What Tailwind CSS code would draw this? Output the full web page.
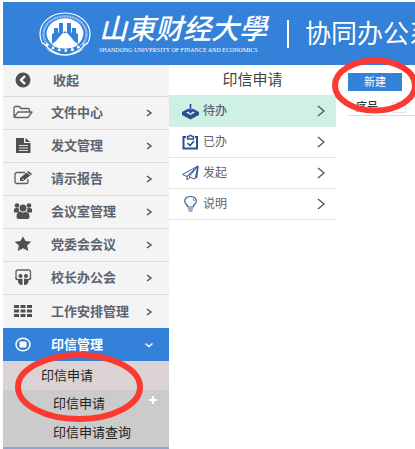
<!DOCTYPE html>
<html lang="zh-CN">
<head>
<meta charset="utf-8">
<meta name="viewport" content="width=device-width, initial-scale=1">
<title>协同办公系统</title>
<script src="https://cdn.jsdelivr.net/npm/@tailwindcss/browser@4"></script>
</head>
<body class="relative min-h-screen overflow-hidden bg-white pl-[3px] pt-[2px] font-['Liberation_Sans','Noto_Sans_CJK_SC',sans-serif] text-[13px] text-[#5b6470]">
<header class="flex h-[63px] items-center overflow-hidden whitespace-nowrap bg-[#3381d8] pl-9 text-white">
  <svg class="h-11 w-[52px] shrink-0" viewBox="0 0 52 44" role="img" aria-label="校徽">
    <ellipse cx="26" cy="22" rx="25" ry="21" fill="none" stroke="#fff" stroke-width="1.2"/>
    <ellipse cx="26" cy="22" rx="21.5" ry="17.7" fill="none" stroke="#9cc5f2" stroke-width="2.4" stroke-dasharray="1.6 .5"/>
    <ellipse cx="26" cy="21.5" rx="18.4" ry="15.2" fill="#fff"/>
    <path d="M13 32V22l2-1v-5h4v5l1-1V11h4v10h4V11h4v9l1 1v-5h4v5l2 1v10l-4-3-4-5-5-5-5 5-4 5z" fill="#3381d8"/>
    <path d="M13 33q6-1 8-6 2-3 5-4 3 1 5 4 2 5 8 6l-6 3H19z" fill="#fff"/>
    <path d="M5 31q21 13 42 0l2 3Q26 49 3 34z" fill="#3381d8"/>
    <path d="M7 32q19 13 38 0" fill="none" stroke="#fff" stroke-width="2.6" stroke-dasharray="2.6 4"/>
    <path d="M4 31q22 24 44 0" fill="none" stroke="#fff" stroke-width="1.2"/>
  </svg>
  <div class="ml-2 flex w-[168px] shrink-0 flex-col">
    <span class="text-[28px] font-medium italic leading-8">山東财经大學</span>
    <span class="font-['Liberation_Serif',serif] text-[6px] leading-[8px]">SHANDONG UNIVERSITY OF FINANCE AND ECONOMICS</span>
  </div>
  <span class="ml-5 h-7 w-[2px] shrink-0 bg-white"></span>
  <h1 class="ml-4 text-[26px] font-normal leading-8">协同办公系统</h1>
</header>
<div class="flex">
  <nav class="w-[166px] shrink-0 bg-[#f4f4f4] font-bold">
    <button type="button" class="flex h-8 w-full items-center border-b border-[#dadada] pl-2 text-left">
      <svg class="size-6" viewBox="0 0 24 24"><circle cx="12" cy="11" r="7.5" fill="#505050"/><path d="M14 7l-4 4 4 4" fill="none" stroke="#fff" stroke-width="2.4"/></svg>
      <span class="ml-[18px]">收起</span>
    </button>
    <a href="#" class="flex h-[33px] items-center border-b border-[#dadada] pl-2 pr-[14px]">
      <svg class="size-6" viewBox="0 0 24 24" fill="none" stroke="#606060" stroke-width="1.3" stroke-linejoin="round"><path d="M3 16V7q0-1.500 1.500-1.500h4l1.500 2h7q1.500 0 1.500 1.500v2M3 16l4-5h14l-4 5.500H4Q3 16.500 3 16z"/></svg>
      <span class="ml-4 flex-1">文件中心</span>
      <svg class="size-3" viewBox="0 0 12 12" fill="none" stroke="#555" stroke-width="1.500"><path d="M4 3l4 3-4 3"/></svg>
    </a>
    <a href="#" class="flex h-[33px] items-center border-b border-[#dadada] pl-2 pr-[14px]">
      <svg class="size-6" viewBox="0 0 24 24"><path d="M5 4h8v5h6.500v10H5zM14.500 4l5 4h-5z" fill="#505050"/><path d="M8 11.500h9M8 14h9M8 16.500h9" stroke="#ddd" stroke-width="1"/></svg>
      <span class="ml-4 flex-1">发文管理</span>
      <svg class="size-3" viewBox="0 0 12 12" fill="none" stroke="#555" stroke-width="1.500"><path d="M4 3l4 3-4 3"/></svg>
    </a>
    <a href="#" class="flex h-[33px] items-center border-b border-[#dadada] pl-2 pr-[14px]">
      <svg class="size-6" viewBox="0 0 24 24"><path d="M14 5.500H6q-2 0-2 2v7q0 2 2 2h9q2 0 2-2V12" fill="none" stroke="#606060" stroke-width="1.300"/><path d="M9 11l8.500-7 3.500 3-8.500 7H9z" fill="#505050"/><path d="M11 11.500l2 1.500M16 5.500l3 2.500" stroke="#f4f4f4" stroke-width=".9"/></svg>
      <span class="ml-4 flex-1">请示报告</span>
      <svg class="size-3" viewBox="0 0 12 12" fill="none" stroke="#555" stroke-width="1.500"><path d="M4 3l4 3-4 3"/></svg>
    </a>
    <a href="#" class="flex h-[33px] items-center border-b border-[#dadada] pl-2 pr-[14px]">
      <svg class="size-6" viewBox="0 0 24 24" fill="#505050"><circle cx="6" cy="5.500" r="2.300"/><circle cx="18" cy="5.500" r="2.300"/><circle cx="12" cy="8" r="3.500"/><path d="M3 12.500V9q1-1.500 4.500-1 0 3 1.500 4.500zM21 12.500V9q-1-1.500-4.500-1 0 3-1.500 4.500zM5.500 17q0-5 3.500-5.500 3 2 6 0 3.500.5 3.500 5.500 0 2-2 2h-9q-2 0-2-2z"/></svg>
      <span class="ml-4 flex-1">会议室管理</span>
      <svg class="size-3" viewBox="0 0 12 12" fill="none" stroke="#555" stroke-width="1.500"><path d="M4 3l4 3-4 3"/></svg>
    </a>
    <a href="#" class="flex h-[33px] items-center border-b border-[#dadada] pl-2 pr-[14px]">
      <svg class="size-6" viewBox="0 0 24 24" fill="#505050"><path d="M12 3.500l2.500 4.600 5.800.7-4.200 3.700 1.200 5.500-5.300-2.700L6.700 18l1.200-5.500-4.200-3.700 5.800-.7z"/></svg>
      <span class="ml-4 flex-1">党委会会议</span>
      <svg class="size-3" viewBox="0 0 12 12" fill="none" stroke="#555" stroke-width="1.500"><path d="M4 3l4 3-4 3"/></svg>
    </a>
    <a href="#" class="flex h-[33px] items-center border-b border-[#dadada] pl-2 pr-[14px]">
      <svg class="size-6" viewBox="0 0 24 24"><path d="M6 12.500H5V6q0-2 2-2h10.500q2 0 2 2v6.500h-1" fill="none" stroke="#606060" stroke-width="1.300"/><circle cx="9.500" cy="10" r="2" fill="#505050"/><circle cx="15" cy="10" r="2" fill="#505050"/><path d="M4 12q4 1.500 7.500.5v6.500Q7 19 7 14.500 5 14 4 12zM20.500 12q-4 1.500-7.500.5v6.500q4.500 0 4.500-4.500 2-.5 3-2.500z" fill="#505050"/></svg>
      <span class="ml-4 flex-1">校长办公会</span>
      <svg class="size-3" viewBox="0 0 12 12" fill="none" stroke="#555" stroke-width="1.500"><path d="M4 3l4 3-4 3"/></svg>
    </a>
    <a href="#" class="flex h-[33px] items-center pl-2 pr-[14px]">
      <svg class="size-6" viewBox="0 0 24 24" fill="#505050"><path d="M3 5h5v3H3zM9.500 5h5v3h-5zM16 5h5v3h-5zM3 9.500h5v3H3zM9.500 9.500h5v3h-5zM16 9.500h5v3h-5zM3 14h5v3H3zM9.500 14h5v3h-5zM16 14h5v3h-5z"/></svg>
      <span class="ml-4 flex-1">工作安排管理</span>
      <svg class="size-3" viewBox="0 0 12 12" fill="none" stroke="#555" stroke-width="1.500"><path d="M4 3l4 3-4 3"/></svg>
    </a>
    <a href="#" aria-expanded="true" class="flex h-[33px] items-center bg-[#3381d8] pl-2 pr-[14px] text-white">
      <svg class="size-6" viewBox="0 0 24 24"><ellipse cx="12" cy="11.500" rx="7" ry="6.300" fill="none" stroke="#fff" stroke-width="1.500"/><rect x="8.500" y="8.500" width="7" height="6" rx="1" fill="#fff"/></svg>
      <span class="ml-4 flex-1">印信管理</span>
      <svg class="size-3" viewBox="0 0 12 12" fill="none" stroke="#fff" stroke-width="1.500"><path d="M2.500 4.500l3.500 3 3.500-3"/></svg>
    </a>
    <div class="border-b-2 border-[#8fa5cf] bg-[#cbcbcb] font-normal text-[#222]">
      <a href="#" class="flex h-[29px] items-center bg-[#dbd3d3] pl-[38px]">印信申请</a>
      <a href="#" class="flex h-[28px] items-center justify-between pl-[50px] pr-3">印信申请
        <svg class="mb-2 size-2" viewBox="0 0 8 8" stroke="#fff" stroke-width="2"><path d="M4 0v8M0 4h8"/></svg>
      </a>
      <a href="#" class="flex h-[29px] items-center pl-[50px]">印信申请查询</a>
    </div>
  </nav>
  <section class="w-[167px] shrink-0 text-[12px]">
    <h2 class="flex h-[30px] items-center justify-center text-[15px] text-[#444]">印信申请</h2>
    <a href="#" class="flex h-8 items-center border-b border-[#dceee8] bg-[#cff1e5] pl-3 pr-2 font-medium">
      <svg class="size-5" viewBox="0 0 20 20"><path d="M5.500 8.500L1 11v3l8.500 4.500L18 14v-3l-4.500-2.500z" fill="#29508f"/><path d="M9.500 9.500L5 11.500l4.500 2.500 4.500-2.500z" fill="#cff1e5"/><path d="M9.500 3v7.500M6.500 8l3 3.500 3-3.500" fill="none" stroke="#29508f" stroke-width="1.700"/></svg>
      <span class="ml-[2px] flex-1">待办</span>
      <svg class="h-4 w-4" viewBox="0 0 16 16" fill="none" stroke="#555" stroke-width="1.300"><path d="M6 3l6 5-6 5"/></svg>
    </a>
    <a href="#" class="flex h-[31px] items-center border-b border-[#e4e4e4] pl-3 pr-2">
      <svg class="size-5" viewBox="0 0 20 20" fill="none" stroke="#29508f"><path d="M5 5H2.500v11.500h13.500V5h-2" stroke-width="2"/><path d="M6.500 7h6V4.500H11q-1.500-2.500-3 0H6.500z" stroke-width="1.300"/><path d="M6.500 11l2.500 2.500 4-4.500" stroke-width="1.600"/></svg>
      <span class="ml-[2px] flex-1">已办</span>
      <svg class="h-4 w-4" viewBox="0 0 16 16" fill="none" stroke="#555" stroke-width="1.300"><path d="M6 3l6 5-6 5"/></svg>
    </a>
    <a href="#" class="flex h-[31px] items-center border-b border-[#e4e4e4] pl-3 pr-2">
      <svg class="size-5" viewBox="0 0 20 20" fill="none" stroke="#3b5c98" stroke-width="1"><path d="M17 3L1.500 11.500l4.500 2zM17 3L8 14l6 2zM17 3L6 13.500V17l3-2.500"/><path d="M17 3l-1.500 12" stroke-width="1.500"/></svg>
      <span class="ml-[2px] flex-1">发起</span>
      <svg class="h-4 w-4" viewBox="0 0 16 16" fill="none" stroke="#555" stroke-width="1.300"><path d="M6 3l6 5-6 5"/></svg>
    </a>
    <a href="#" class="flex h-[31px] items-center border-b border-[#e4e4e4] pl-3 pr-2">
      <svg class="size-5" viewBox="0 0 20 20" fill="none" stroke="#3b5c98" stroke-width="1.200"><path d="M7 13Q6.500 11.500 5 10 3 8 4 5.500 5.500 2.500 9.500 2.500t5.500 3Q16 8 14 10q-1.500 1.500-2 3zM7 15h5M7.500 17h4"/><path d="M12 5q1.200.7 1.200 2.200" stroke-width=".9"/></svg>
      <span class="ml-[2px] flex-1">说明</span>
      <svg class="h-4 w-4" viewBox="0 0 16 16" fill="none" stroke="#555" stroke-width="1.300"><path d="M6 3l6 5-6 5"/></svg>
    </a>
  </section>
  <main class="min-w-0 flex-1 pl-3 pt-2">
    <button type="button" class="block h-[18px] w-[54px] bg-[#3381d8] text-[11px] leading-[18px] text-white">新建</button>
    <table class="mt-2 w-full border-b border-[#dcdcdc] text-[11px] text-[#333]">
      <thead><tr class="h-4"><th scope="col" class="w-11 pl-2 text-left font-medium leading-4">序号</th><th scope="col" class="text-left"><input type="checkbox" aria-label="全选" class="block h-[11px] w-[14px] appearance-none border border-[#e5e5e5]"></th></tr></thead>
    </table>
  </main>
</div>
<svg class="pointer-events-none absolute left-[332px] top-[57px] h-[57px] w-[86px]" viewBox="0 0 86 57" fill="none" stroke="#fb3930" stroke-width="6" aria-hidden="true"><ellipse cx="43" cy="28.500" rx="40" ry="25"/></svg>
<svg class="pointer-events-none absolute left-[14px] top-[351px] h-[72px] w-[130px]" viewBox="0 0 130 72" fill="none" stroke="#fb3930" stroke-width="6" aria-hidden="true"><ellipse cx="65" cy="36" rx="61" ry="32"/></svg>
</body>
</html>
